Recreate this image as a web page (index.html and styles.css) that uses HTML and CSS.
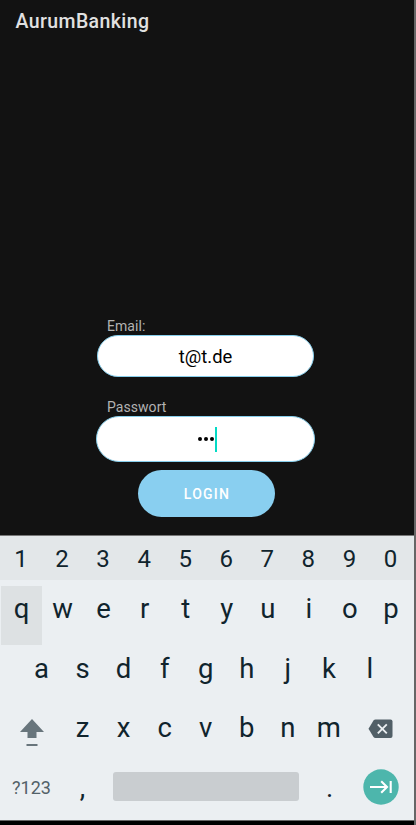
FILE: index.html
```html
<!DOCTYPE html>
<html lang="de">
<head>
<meta charset="utf-8">
<title>AurumBanking</title>
<link rel="stylesheet" href="styles.css">
</head>
<body>
<div class="phone">
  <header class="bar"><span class="title">AurumBanking</span></header>
  <main class="login">
    <div class="label">Email:</div>
    <div class="field email"><span class="value">t@t.de</span></div>
    <div class="label second">Passwort</div>
    <div class="field password"><i class="dot"></i><i class="dot"></i><i class="dot"></i><i class="caret"></i></div>
    <button class="submit">LOGIN</button>
  </main>
  <section class="keyboard">
    <div class="row numbers"><span>1</span><span>2</span><span>3</span><span>4</span><span>5</span><span>6</span><span>7</span><span>8</span><span>9</span><span>0</span></div>
    <div class="row"><span class="pressed">q</span><span>w</span><span>e</span><span>r</span><span>t</span><span>y</span><span>u</span><span>i</span><span>o</span><span>p</span></div>
    <div class="row middle"><span>a</span><span>s</span><span>d</span><span>f</span><span>g</span><span>h</span><span>j</span><span>k</span><span>l</span></div>
    <div class="row third">
      <span class="wide shift"><svg width="24" height="29" viewBox="0 0 24 29"><path fill="#68757c" d="M12 1 24 14H16.500V20H7.500V14H0zM6.500 26h11v2h-11z"/></svg></span>
      <span>z</span><span>x</span><span>c</span><span>v</span><span>b</span><span>n</span><span>m</span>
      <span class="wide erase"><svg width="25" height="20" viewBox="0 0 25 20"><path fill="#515f67" d="M7.500 .5H22.500a2 2 0 0 1 2 2V17a2 2 0 0 1-2 2H7.500q-1.200 0-2-1L.5 9.750 5.500 1.500q.8-1 2-1z"/><path stroke="#ebeff2" stroke-width="1.900" d="m9.800 5.300 9 9m0-9-9 9"/></svg></span>
    </div>
    <div class="row bottom">
      <span class="symbols">?123</span><span class="comma">,</span><span class="space"></span><span class="period">.</span>
      <span class="next"><svg width="36" height="36" viewBox="0 0 36 36"><circle cx="18" cy="18" r="17.700" fill="#4db6ac"/><path fill="none" stroke="#fff" stroke-width="2.100" d="M7 18h16.500M18.200 12.300l5.800 5.700-5.800 5.700M27.700 12v12"/></svg></span>
    </div>
  </section>
</div>
</body>
</html>
```

FILE: styles.css
```css
* { box-sizing: border-box; }
body { margin: 0; background: #000; font-family: Roboto, sans-serif; }
.phone {
  width: 416px;
  height: 825px;
  border-right: 2px solid #666;
  background: #000;
  overflow: hidden;
}
.bar { height: 48px; padding: 9px 0 0 15.5px; background: #121212; }
.title { display: block; color: #e1e1e1; font-size: 19.5px; font-weight: 500; line-height: 25px; letter-spacing: .4px; }
.login { height: 487px; padding-top: 269px; background: #121212; }
.label { height: 18px; margin-left: 107px; color: #b3b3b3; font-size: 14px; line-height: 18px; letter-spacing: .05px; }
.label.second { margin-top: 21px; }
.field {
  display: flex;
  align-items: center;
  justify-content: center;
  border: 1px solid #87ceeb;
  background: #fff;
  color: #000;
}
.email { width: 217px; height: 42px; margin-left: 97px; border-radius: 21px; font-size: 18.4px; }
.password { width: 219px; height: 46px; margin-left: 96px; padding-left: 3px; border-radius: 23px; }
.dot { width: 4px; height: 4px; margin-right: 2px; border-radius: 50%; background: #000; }
.dot:nth-child(3) { margin-right: 1px; }
.caret { width: 2px; height: 25px; background: #03dac5; }
.submit {
  display: block;
  width: 137px;
  height: 47px;
  margin: 8px 0 0 138px;
  padding: 1px 0 0 1px;
  border: 0;
  border-radius: 24px;
  background: #89cff0;
  color: #fff;
  font: 500 14px Roboto, sans-serif;
  letter-spacing: 1.25px;
}
.keyboard {
  height: 286px;
  border-top: 1px solid #777;
  border-bottom: 1px solid #666;
  background: #ebeff2;
  color: #10242d;
}
.row { display: flex; height: 59.5px; padding-left: 1px; font-size: 27.5px; line-height: 46px; }
.row > span { width: 41.05px; flex: none; text-align: center; }
.numbers { height: 44px; margin-bottom: 6px; padding-left: .5px; background: #e3e7e9; font-size: 24px; line-height: 46px; }
.row > .pressed { height: 59px; background: #dde1e3; }
.middle { padding-left: 21px; }
.row > .wide { width: 61px; }
.shift svg, .erase svg { display: block; }
.shift svg { margin: 13px 0 0 18.5px; }
.erase svg { margin: 14px 0 0 18.5px; }
.bottom { height: 55px; }
.row > .symbols { width: 61px; color: #526168; font-size: 18px; line-height: 46px; }
.row > .space { width: 186px; height: 29px; margin: 7px 0 0 10px; border-radius: 3px; background: #c9cdd0; }
.row > .period { margin-left: 10px; }
.row > .next { width: 36px; margin: 4px 0 0 13px; }
.next svg { display: block; }
```
